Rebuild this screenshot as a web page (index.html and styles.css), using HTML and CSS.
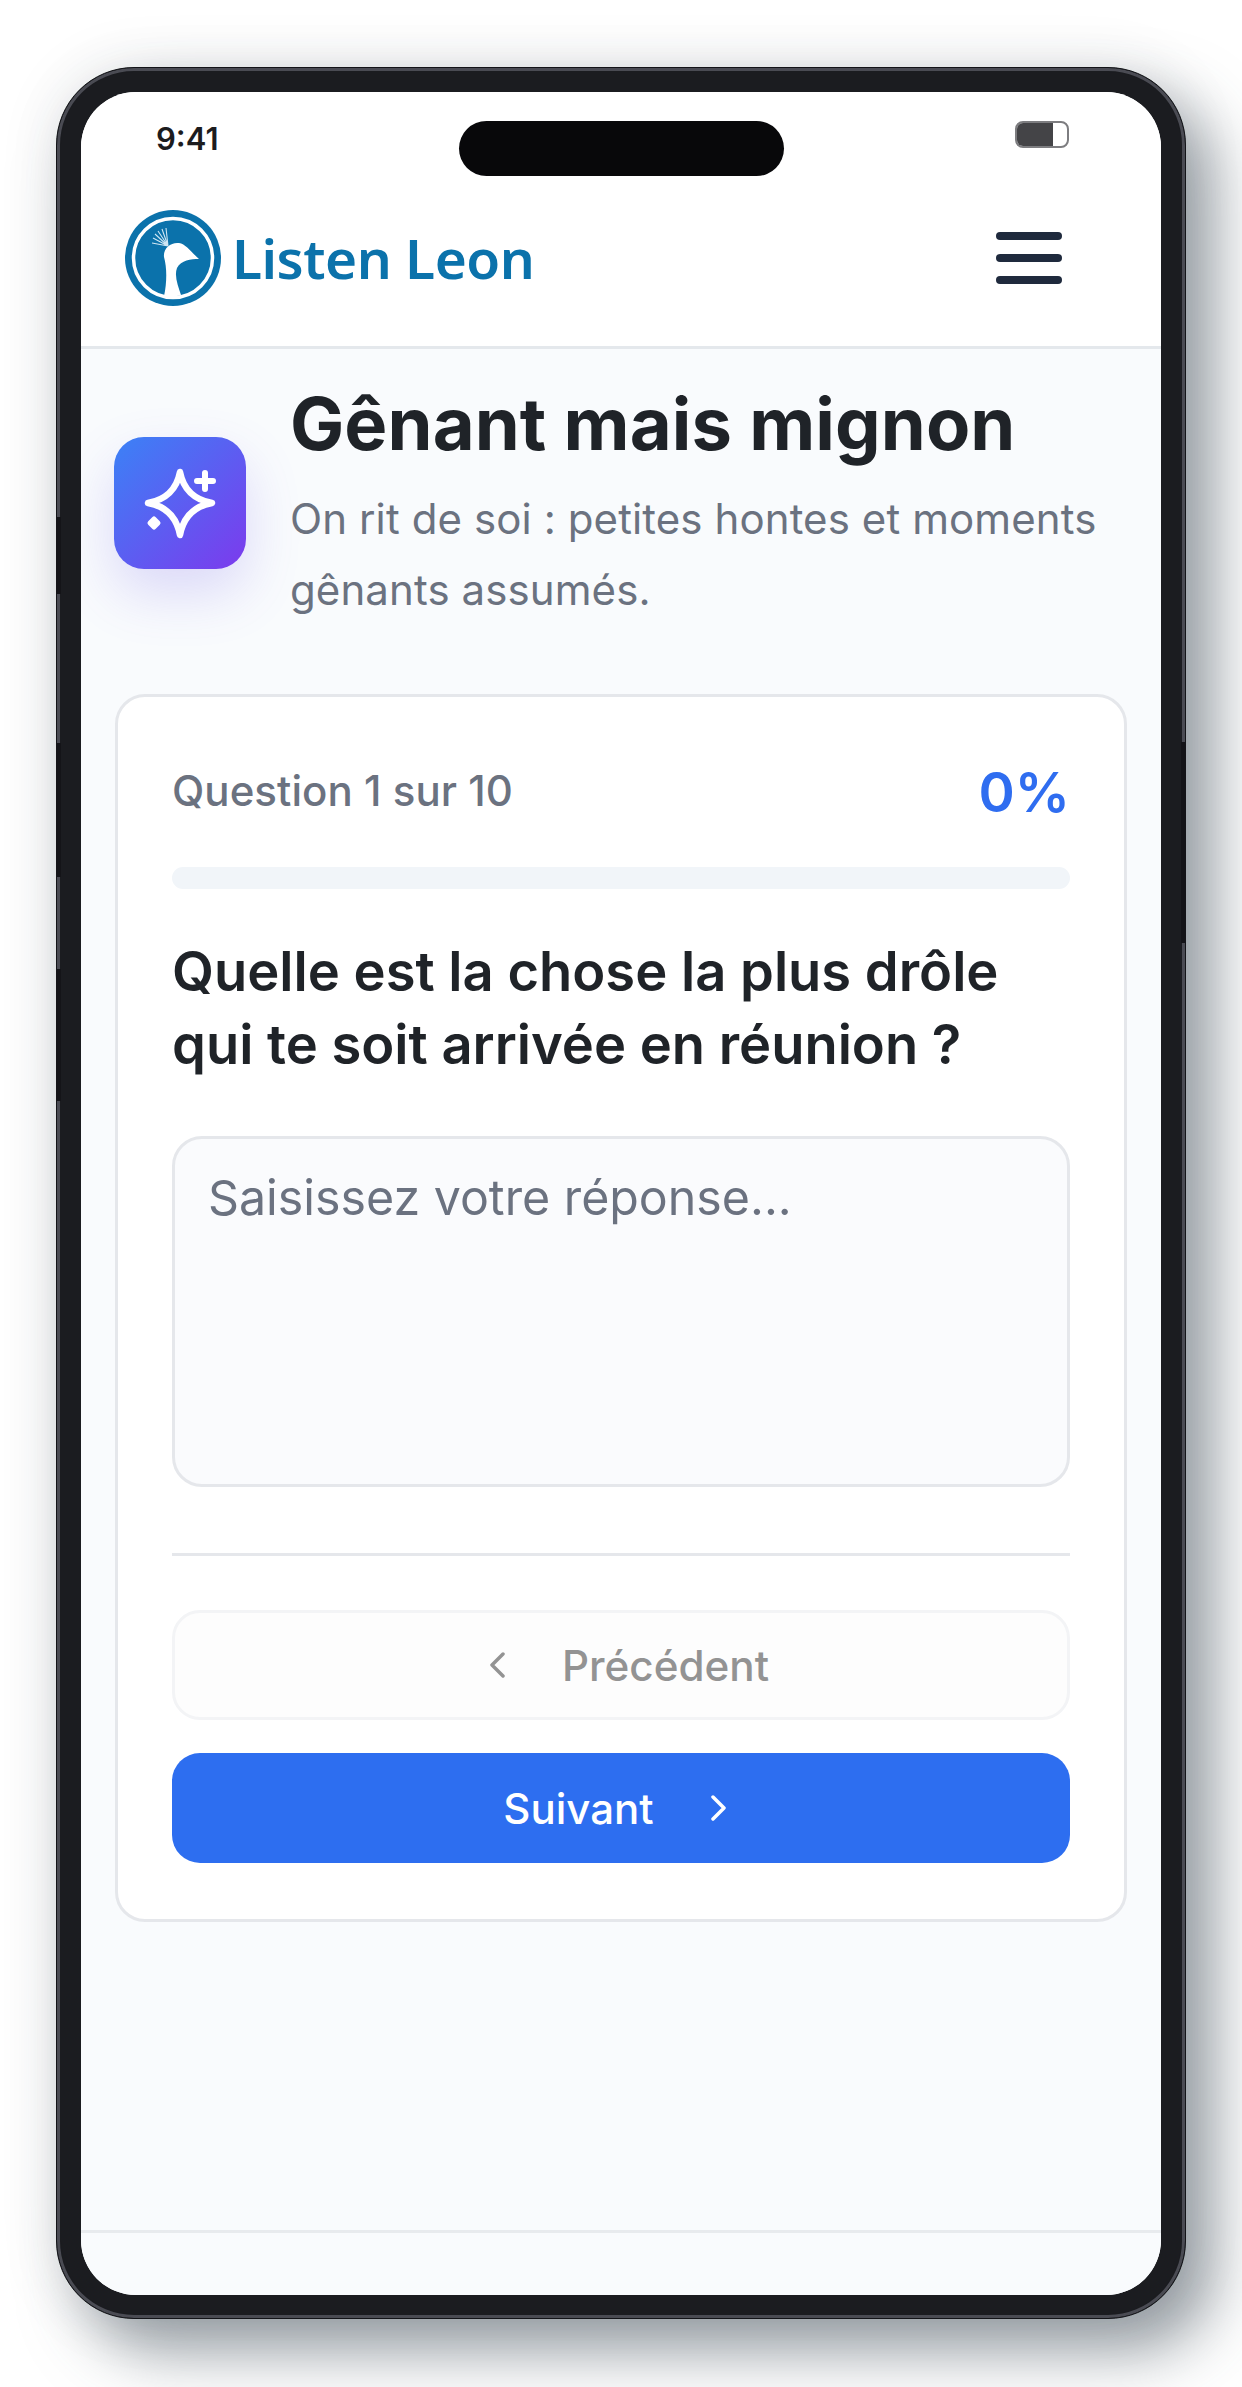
FILE: index.html
```html
<!DOCTYPE html>
<html lang="fr">
<head>
<meta charset="utf-8">
<title>Listen Leon</title>
<link rel="stylesheet" href="styles.css">
</head>
<body>
<div class="phone">
  <span class="gap gap-l1"></span><span class="gap gap-l2"></span><span class="gap gap-l3"></span><span class="gap gap-r1"></span>
  <div class="screen">
    <div class="status">
      <span class="time">9:41</span>
      <span class="island"></span>
      <span class="battery"><span class="battery-fill"></span></span>
    </div>
    <header class="topbar">
      <div class="brand">
        <svg class="logo" viewBox="0 0 96 96" aria-hidden="true">
          <circle cx="48" cy="48" r="48" fill="#0b72ab"/>
          <circle cx="48" cy="48" r="39.5" fill="none" stroke="#fff" stroke-width="3.5"/>
          <path fill="#fff" d="M39 86C42 72 42 58 39 47C38 38 46 32 54 33C61 34 66 42 74 49C66 49 56 50 52 58C49 66 53 76 56 85Q47 88 39 86Z"/>
          <g stroke="#cfe6f3" stroke-width="1.1" fill="none">
            <path d="M43 36L27 33M43 36L28 28M43 36L30 24M43 36L33 21M43 36L37 19M43 36L41 18"/>
          </g>
        </svg>
        <span class="brand-name">Listen Leon</span>
      </div>
      <div class="burger"><i></i><i></i><i></i></div>
    </header>
    <main class="main">
      <section class="intro">
        <div class="tile">
          <svg class="spark" viewBox="0 0 72 74" aria-hidden="true">
            <path d="M36 6Q41 32 68 37Q41 42 36 69Q31 42 4 37Q31 32 36 6Z" fill="none" stroke="#fff" stroke-width="6.5" stroke-linejoin="round"/>
            <path d="M61 7V23M53 15H69" fill="none" stroke="#fff" stroke-width="6" stroke-linecap="round"/>
            <path d="M10 53L14 57L10 61L6 57Z" fill="#fff" stroke="#fff" stroke-width="5" stroke-linejoin="round"/>
          </svg>
        </div>
        <div class="intro-text">
          <h1 class="title">Gênant mais mignon</h1>
          <p class="subtitle">On rit de soi : petites hontes et moments gênants assumés.</p>
        </div>
      </section>
      <section class="card">
        <div class="progress-row">
          <span class="counter">Question 1 sur 10</span>
          <span class="percent">0%</span>
        </div>
        <div class="bar"></div>
        <h2 class="question">Quelle est la chose la plus drôle<br>qui te soit arrivée en réunion ?</h2>
        <textarea class="answer" placeholder="Saisissez votre réponse..."></textarea>
        <hr class="rule">
        <button class="btn btn-prev" type="button">
          <svg class="chev" viewBox="0 0 16 26" aria-hidden="true"><path d="M14 2L3 13L14 24"/></svg>
          <span>Précédent</span>
        </button>
        <button class="btn btn-next" type="button">
          <span>Suivant</span>
          <svg class="chev" viewBox="0 0 16 26" aria-hidden="true"><path d="M2 2L13 13L2 24"/></svg>
        </button>
      </section>
    </main>
    <footer class="footer"></footer>
  </div>
</div>
</body>
</html>
```

FILE: styles.css
```css
* { box-sizing: border-box; }
html, body { margin: 0; padding: 0; }
body {
  width: 1242px;
  height: 2387px;
  background: #fff;
  overflow: hidden;
  font-family: Inter, "Liberation Sans", sans-serif;
  padding: 67px 56px 68px 56px;
}
.phone {
  position: relative;
  width: 1130px;
  height: 2252px;
  padding: 24px 24px 23px 24px;
  border: 1px solid #131418;
  border-radius: 78px;
  background: #1b1c20;
  box-shadow:
    inset 0 0 0 3px #4a4b53,
    inset 0 0 0 4px #1b1c20,
    0 0 60px rgba(40, 45, 60, 0.1),
    28px 32px 62px rgba(60, 72, 85, 0.52);
}
.gap { position: absolute; width: 5px; background: #141418; }
.gap-l1 { left: -1px; top: 449px; height: 77px; }
.gap-l2 { left: -1px; top: 675px; height: 134px; }
.gap-l3 { left: -1px; top: 901px; height: 132px; }
.gap-r1 { right: -1px; top: 674px; height: 201px; }
.screen {
  display: flex;
  flex-direction: column;
  height: 100%;
  border-radius: 55px;
  overflow: hidden;
  background: #f9fbfd;
}
.status {
  position: relative;
  display: flex;
  justify-content: space-between;
  align-items: flex-start;
  height: 101px;
  padding: 29px 92px 0 75px;
  background: #fff;
}
.time {
  font-size: 31px;
  font-weight: 600;
  line-height: 36px;
  color: #1c1c1e;
}
.island {
  position: absolute;
  left: 378px;
  top: 29px;
  width: 325px;
  height: 55px;
  border-radius: 28px;
  background: #08080a;
}
.battery {
  display: block;
  width: 54px;
  height: 27px;
  border: 2px solid #7d7d80;
  border-radius: 8px;
  overflow: hidden;
  background: #fff;
}
.battery-fill { display: block; width: 36px; height: 100%; background: #444447; }
.topbar {
  display: flex;
  justify-content: space-between;
  align-items: center;
  height: 156px;
  padding: 0 99px 24px 44px;
  background: #fff;
  border-bottom: 3px solid #e4e8ec;
}
.brand { display: flex; align-items: center; gap: 11px; }
.logo { display: block; width: 96px; height: 96px; }
.brand-name {
  font-family: "Noto Sans", "Open Sans", sans-serif;
  font-size: 55px;
  font-weight: 600;
  line-height: 64px;
  letter-spacing: -0.5px;
  color: #0b72ab;
}
.burger { display: flex; flex-direction: column; gap: 14px; }
.burger i { display: block; width: 66px; height: 8px; border-radius: 4px; background: #1f2a3d; }
.main { flex: 1; padding: 30px 34px 0 33px; }
.intro { display: flex; align-items: center; gap: 44px; }
.tile {
  flex: none;
  display: flex;
  align-items: center;
  justify-content: center;
  width: 132px;
  height: 132px;
  margin-top: 1px;
  border-radius: 30px;
  background: linear-gradient(135deg, #3b82f6, #7c3aed);
  box-shadow: 0 24px 55px rgba(99, 80, 230, 0.2);
}
.spark { display: block; width: 72px; height: 74px; }
.title {
  margin: 0 0 14px;
  font-size: 72.3px;
  font-weight: 700;
  line-height: 90px;
  letter-spacing: 0.1px;
  color: #1f2328;
}
.subtitle {
  margin: 0;
  font-size: 42px;
  font-weight: 400;
  line-height: 71px;
  letter-spacing: 0.1px;
  color: #6b7280;
}
.card {
  display: flex;
  flex-direction: column;
  margin: 69px 0 0 1px;
  padding: 61px 54px 56px;
  background: #fff;
  border: 3px solid #e5e7eb;
  border-radius: 30px;
}
.progress-row {
  display: flex;
  justify-content: space-between;
  align-items: center;
  height: 68px;
}
.counter { padding-bottom: 4px; font-size: 42px; font-weight: 500; letter-spacing: 0.05px; color: #6b7280; }
.percent { font-size: 55px; font-weight: 600; color: #2f6df0; }
.bar { height: 22px; margin-top: 41px; border-radius: 11px; background: #f1f5f9; }
.question {
  margin: 46px 0 0;
  font-size: 54.3px;
  font-weight: 600;
  line-height: 73px;
  color: #1f2328;
}
.answer {
  display: block;
  width: 100%;
  height: 351px;
  margin-top: 55px;
  padding: 30px 33px;
  border: 3px solid #e5e7eb;
  border-radius: 30px;
  background: #fafbfd;
  resize: none;
  outline: none;
  font-family: Inter, "Liberation Sans", sans-serif;
  font-size: 48.3px;
  line-height: 58px;
}
.answer::placeholder { color: #6b7280; opacity: 1; }
.rule { width: 100%; height: 3px; margin: 66px 0 0; border: 0; background: #e5e7eb; }
.btn {
  display: flex;
  align-items: center;
  justify-content: center;
  gap: 57px;
  width: 100%;
  border-radius: 28px;
  font-family: Inter, "Liberation Sans", sans-serif;
  font-weight: 500;
}
.btn-prev {
  height: 110px;
  margin-top: 54px;
  padding-left: 22px;
  border: 3px solid #f3f4f6;
  background: #fdfdfd;
  color: #939393;
  font-size: 42.2px;
}
.btn-next {
  height: 110px;
  margin-top: 33px;
  padding-right: 18px;
  border: 0;
  background: #2d6ef0;
  color: #fff;
  font-size: 42px;
}
.chev {
  display: block;
  width: 16px;
  height: 26px;
  fill: none;
  stroke: currentColor;
  stroke-width: 3.5;
  stroke-linecap: round;
  stroke-linejoin: round;
}
.footer { height: 65px; border-top: 3px solid #e8ebee; background: #f9fbfd; }
```
